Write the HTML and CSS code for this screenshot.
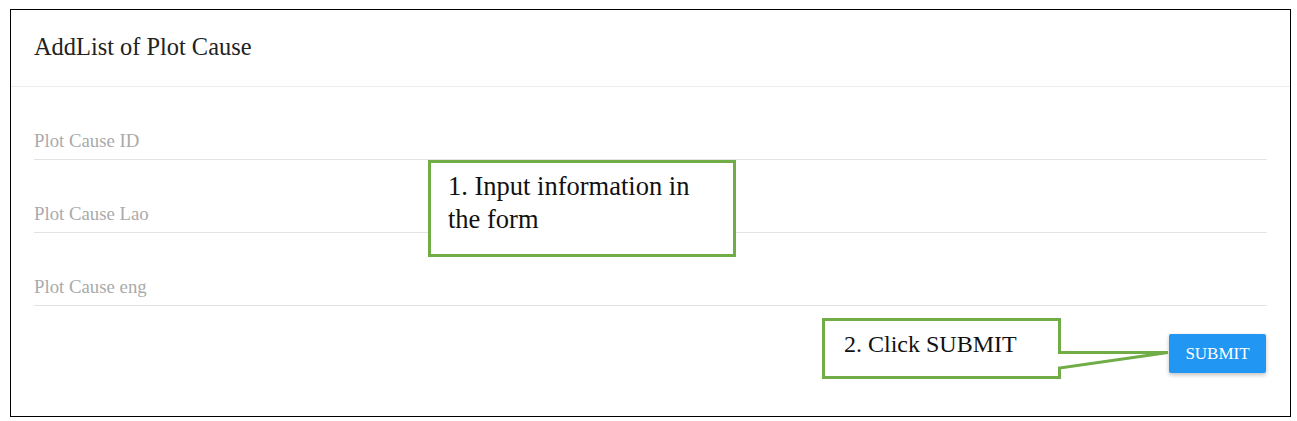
FILE: index.html
```html
<!DOCTYPE html>
<html lang="en">
<head>
  <meta charset="UTF-8" />
  <title>AddList of Plot Cause</title>
  <link rel="stylesheet" href="styles.css">
</head>
<body>

  <div class="frame">
    <div class="card-header">
      <h1>AddList of Plot Cause</h1>
    </div>

    <form class="card-body">
      <input type="text" class="field" placeholder="Plot Cause ID"/>
      <input type="text" class="field" placeholder="Plot Cause Lao"/>
      <input type="text" class="field" placeholder="Plot Cause eng"/>

      <div class="actions">
        <button type="button">SUBMIT</button>
      </div>
    </form>

    <!-- annotations -->
    <div class="note note-input">1. Input information in the form</div>

    <svg class="note-arrow" width="350" height="64" viewBox="821 317 350 64">
      <path d="M823.5 319.5 H1059.5 V352.5 L1168 352.5 L1059.5 368 V377.5 H823.5 Z" fill="#fff" stroke="#70ad47" stroke-width="3"/>
    </svg>
    <div class="note-submit">2. Click SUBMIT</div>
  </div>

</body>
</html>
```

FILE: styles.css
```css
body {
  margin: 0;
  background: #fff;
  font-family: "Liberation Serif", "Times New Roman", serif;
  color: #222;
}

.frame {
  position: relative;
  box-sizing: border-box;
  width: 1281px;
  height: 408px;
  margin: 9px 0 0 10px;
  border: 1px solid #000;
}

.card-header {
  height: 76px;
  padding: 0 23px;
  display: flex;
  align-items: center;
  border-bottom: 1px solid #ececec;
}

.card-header h1 {
  margin: 0 0 2px;
  font-size: 24.4px;
  font-weight: normal;
  color: #222;
}

.card-body {
  display: flex;
  flex-direction: column;
  padding: 36px 23px 0;
  gap: 36px;
}

.field {
  display: block;
  box-sizing: border-box;
  width: 100%;
  height: 37px;
  padding: 0;
  border: none;
  border-bottom: 1px solid #e3e3e3;
  font-family: inherit;
  font-size: 18.8px;
  color: #333;
  outline: none;
}

.field::placeholder {
  color: #aaa;
}

.actions {
  display: flex;
  justify-content: flex-end;
  margin-top: -8px;
}

.actions button {
  width: 97px;
  height: 39px;
  margin-right: 1px;
  background: #2196f3;
  color: #fff;
  border: none;
  border-radius: 2px;
  font-family: inherit;
  font-size: 17px;
  box-shadow: 0 2px 4px rgba(0, 0, 0, 0.25);
  cursor: pointer;
}

.note {
  position: absolute;
  box-sizing: border-box;
  background: #fff;
  border: 3px solid #70ad47;
  color: #111;
}

.note-input {
  left: 417px;
  top: 150px;
  width: 308px;
  height: 97px;
  padding: 7px 30px 0 17px;
  font-size: 26.5px;
  line-height: 33px;
}

.note-arrow {
  position: absolute;
  left: 810px;
  top: 307px;
}

.note-submit {
  position: absolute;
  left: 833px;
  top: 319px;
  font-size: 24px;
  line-height: 30px;
  color: #111;
}
```
